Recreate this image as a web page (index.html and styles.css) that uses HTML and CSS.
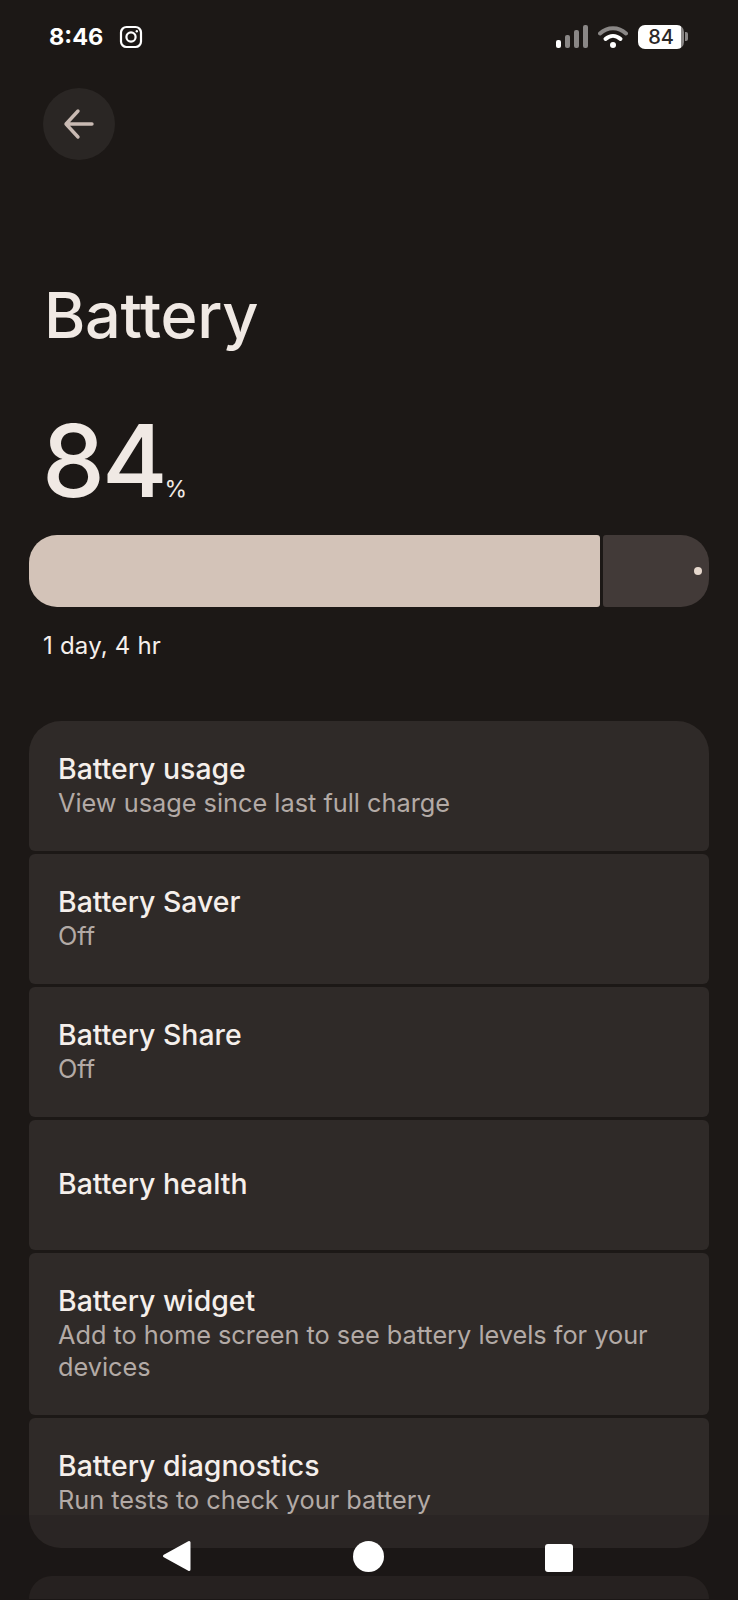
FILE: index.html
```html
<!DOCTYPE html>
<html lang="en">
  <head>
    <meta charset="UTF-8" />
    <meta name="viewport" content="width=device-width, initial-scale=1.0" />
    <title>Battery</title>
    <link rel="stylesheet" href="styles.css">
  </head>
  <body>
    <header class="status-bar">
      <div class="status-left">
        <span class="clock">8:46</span>
        <svg class="ig-icon" width="24" height="24" viewBox="0 0 24 24" fill="none" stroke="#fff" stroke-width="2.2">
          <rect x="2" y="2" width="20" height="20" rx="5.5" />
          <circle cx="12" cy="12" r="4.6" />
          <circle cx="17.8" cy="6.2" r="1.2" fill="#fff" stroke="none" />
        </svg>
      </div>
      <div class="status-right">
        <svg width="32" height="24" viewBox="0 0 32 24">
          <rect x="0" y="15" width="5" height="8" rx="2" fill="#fff" />
          <rect x="9" y="10" width="5" height="13" rx="2" fill="#8a8786" />
          <rect x="18" y="5" width="5" height="18" rx="2" fill="#8a8786" />
          <rect x="27" y="0" width="5" height="23" rx="2" fill="#8a8786" />
        </svg>
        <svg width="30" height="24" viewBox="0 0 30 24" fill="none" stroke-linecap="round">
          <path d="M2 8.5C9.5 1.5 20.5 1.5 28 8.5" stroke="#8a8786" stroke-width="4" />
          <path d="M7.5 14C12 10 18 10 22.5 14" stroke="#fff" stroke-width="4" />
          <circle cx="15" cy="20" r="3" fill="#fff" />
        </svg>
        <div class="status-battery">
          <span class="status-battery-level">84</span>
          <span class="status-battery-nub"></span>
        </div>
      </div>
    </header>

    <main>
      <div class="back-button">
        <svg width="32" height="32" viewBox="0 0 32 32" fill="none" stroke="#c9bab3" stroke-width="3.4" stroke-linecap="round" stroke-linejoin="round">
          <path d="M29 16H3M15 3L3 16L15 29" />
        </svg>
      </div>

      <h1 class="page-title">Battery</h1>

      <div class="level">84<span class="level-unit">%</span></div>

      <div class="meter">
        <div class="meter-fill"></div>
        <div class="meter-rest"><span class="meter-dot"></span></div>
      </div>

      <p class="time-left">1 day, 4 hr</p>

      <section class="rows">
        <div class="row row-first">
          <h3>Battery usage</h3>
          <p>View usage since last full charge</p>
        </div>
        <div class="row">
          <h3>Battery Saver</h3>
          <p>Off</p>
        </div>
        <div class="row">
          <h3>Battery Share</h3>
          <p>Off</p>
        </div>
        <div class="row row-single">
          <h3>Battery health</h3>
        </div>
        <div class="row row-tall">
          <h3>Battery widget</h3>
          <p>Add to home screen to see battery levels for your devices</p>
        </div>
        <div class="row row-last">
          <h3>Battery diagnostics</h3>
          <p>Run tests to check your battery</p>
        </div>
      </section>

      <section class="next-section"></section>
    </main>

    <nav class="nav-bar">
      <svg width="30" height="32" viewBox="0 0 30 32" fill="#fff" stroke="#fff" stroke-width="3" stroke-linejoin="round">
        <path d="M27 2.5V29.5L2.5 16Z" />
      </svg>
      <span class="nav-home"></span>
      <span class="nav-recents"></span>
    </nav>
  </body>
</html>
```

FILE: styles.css
```css
* {
  box-sizing: border-box;
  margin: 0;
  padding: 0;
}

body {
  position: relative;
  height: 1600px;
  overflow: hidden;
  background-color: #1c1816;
  color: #f0e9e4;
  font-family: "Inter", Arial, sans-serif;
}

.status-bar {
  display: flex;
  justify-content: space-between;
  align-items: center;
  height: 72px;
  padding: 1px 50px 0 49px;
}

.status-left {
  display: flex;
  align-items: center;
  gap: 16px;
}

.clock {
  font-size: 23.5px;
  font-weight: 700;
  color: white;
}

.status-right {
  display: flex;
  align-items: center;
  gap: 10px;
}

.status-battery {
  display: flex;
  align-items: center;
  gap: 1px;
}

.status-battery-level {
  width: 46px;
  height: 24px;
  border-radius: 7px;
  background: linear-gradient(to right, white 93%, #8a8786 93%);
  color: #2b2827;
  font-size: 20px;
  font-weight: 500;
  line-height: 24px;
  text-align: center;
}

.status-battery-nub {
  width: 3px;
  height: 9px;
  border-radius: 0 2px 2px 0;
  background-color: #8a8786;
}

main {
  padding: 16px 29px 0;
}

.back-button {
  display: flex;
  justify-content: center;
  align-items: center;
  width: 72px;
  height: 72px;
  margin-left: 14px;
  border-radius: 50%;
  background-color: #2a2624;
}

.page-title {
  margin: 118px 0 0 15px;
  font-size: 63px;
  font-weight: 500;
  letter-spacing: -0.3px;
  line-height: 74px;
}

.level {
  margin: 64px 0 0 13px;
  font-size: 100px;
  font-weight: 500;
  letter-spacing: -3px;
  line-height: 90px;
}

.level-unit {
  font-size: 23px;
  font-weight: 400;
  letter-spacing: 0;
}

.meter {
  display: flex;
  gap: 3px;
  height: 72px;
  margin-top: 1px;
}

.meter-fill {
  width: 571px;
  border-radius: 28px 3px 3px 28px;
  background-color: #d3c3b8;
}

.meter-rest {
  display: flex;
  flex: 1;
  justify-content: flex-end;
  align-items: center;
  padding-right: 7px;
  border-radius: 3px 28px 28px 3px;
  background-color: #423a38;
}

.meter-dot {
  width: 8px;
  height: 8px;
  border-radius: 50%;
  background-color: #e6d8cd;
}

.time-left {
  margin: 23px 0 0 14px;
  color: #f5efeb;
  font-size: 24px;
  letter-spacing: 0.2px;
  line-height: 32px;
}

.rows {
  display: flex;
  flex-direction: column;
  gap: 3px;
  margin-top: 59px;
}

.row {
  display: flex;
  flex-direction: column;
  justify-content: center;
  height: 130px;
  padding: 0 29px 3px;
  border-radius: 6px;
  background-color: #2f2a28;
}

.row h3 {
  color: #f5efeb;
  font-size: 28.4px;
  font-weight: 500;
  line-height: 37px;
}

.row p {
  color: #b3aaa6;
  font-size: 25.3px;
  line-height: 32px;
}

.row-first {
  border-radius: 32px 32px 6px 6px;
}

.row-tall {
  height: 162px;
}

.row-last {
  border-radius: 6px 6px 32px 32px;
}

.next-section {
  height: 23px;
  margin-top: 28px;
  border-radius: 32px 32px 0 0;
  background-color: #2a2523;
}

/* system nav sits over the scrolled list */
.nav-bar {
  position: absolute;
  left: 0;
  right: 0;
  top: 1515px;
  height: 85px;
  display: flex;
  justify-content: center;
  align-items: flex-end;
  gap: 161px;
  padding: 0 3px 28px 0;
  background-color: rgba(28, 24, 22, 0.22);
}

.nav-home {
  width: 31px;
  height: 31px;
  border-radius: 50%;
  background-color: white;
}

.nav-recents {
  width: 28px;
  height: 28px;
  border-radius: 3px;
  background-color: white;
}
```
